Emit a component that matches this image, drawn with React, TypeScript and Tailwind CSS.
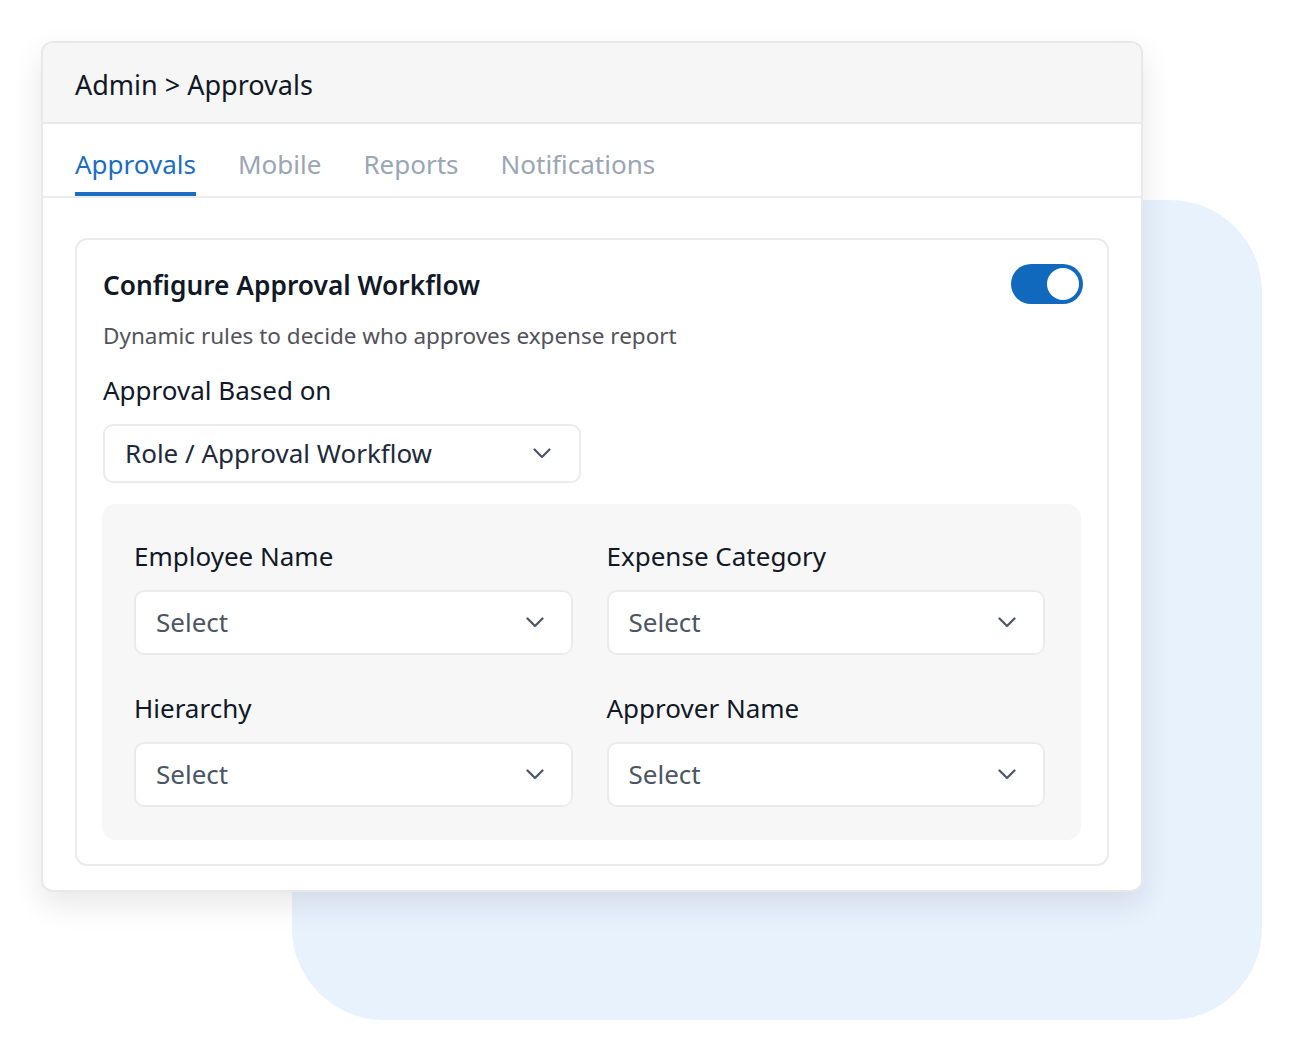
const tabs = ['Approvals', 'Mobile', 'Reports', 'Notifications'];

function Chevron() {
  return (
    <svg width="18" height="11" viewBox="0 0 18 11" fill="none" className="text-[#4b5563]">
      <path d="M1.5 1.5 9 9l7.5-7.5" stroke="currentColor" strokeWidth="2.2" strokeLinecap="round" strokeLinejoin="round" />
    </svg>
  );
}

function SelectBox({ value }: { value: string }) {
  return (
    <div className="flex h-[65px] items-center justify-between rounded-[10px] border-2 border-[#ebebeb] bg-white pl-[20px] pr-[27px]">
      <span className="text-[26px] text-[#4b5563]">{value}</span>
      <Chevron />
    </div>
  );
}

function Field({ label }: { label: string }) {
  return (
    <div className="flex flex-col">
      <div className="text-[26px] leading-[36px] text-[#111827]">{label}</div>
      <div className="mt-[16px]">
        <SelectBox value="Select" />
      </div>
    </div>
  );
}

export default function App() {
  return (
    <div className="relative h-[1060px] w-[1302px] overflow-hidden bg-white font-['Noto_Sans',sans-serif]">
      {/* decorative backdrop */}
      <div className="absolute left-[292px] top-[200px] h-[820px] w-[970px] rounded-[92px] bg-[#e8f2fd]" />

      <div className="relative ml-[41px] mt-[41px] w-[1102px] overflow-hidden rounded-[12px] border-2 border-[#e8e8e8] bg-white shadow-[0_12px_30px_rgba(15,23,42,0.10)]">
        <div className="flex h-[81px] items-center border-b-2 border-[#e8e8e8] bg-[#f6f6f6] px-[32px] pt-[6px]">
          <span className="text-[27px] text-[#111827]">Admin &gt; Approvals</span>
        </div>

        <div className="flex h-[74px] gap-[42px] border-b-2 border-[#ececec] px-[32px]">
          {tabs.map((tab, i) => (
            <div
              key={tab}
              className={`flex items-center border-b-4 pt-[12px] text-[26px] ${i === 0 ? 'border-[#1a6dc0] text-[#1a6dc0]' : 'border-transparent text-[#9aa5b5]'}`}
            >
              {tab}
            </div>
          ))}
        </div>

        <div className="px-[32px] pb-[24px] pt-[40px]">
          <div className="rounded-[12px] border-2 border-[#ebebeb] px-[26px] pb-[24px] pt-[24px]">
            <div className="flex h-[40px] items-center justify-between">
              <h2 className="pt-[4px] text-[26.3px] font-semibold text-[#111827]">Configure Approval Workflow</h2>
              <div className="mr-[-2px] flex h-[40px] w-[72px] items-center justify-end rounded-full bg-[#1169be] pr-[4px]">
                <div className="h-[32px] w-[32px] rounded-full bg-white" />
              </div>
            </div>
            <p className="mt-[17px] text-[22.5px] leading-[30px] text-[#52525b]">Dynamic rules to decide who approves expense report</p>
            <div className="mt-[21px] text-[26px] leading-[36px] text-[#111827]">Approval Based on</div>
            <div className="mt-[16px] flex h-[59px] w-[478px] items-center justify-between rounded-[10px] border-2 border-[#ebebeb] pl-[20px] pr-[28px]">
              <span className="text-[26px] text-[#1e293b]">Role / Approval Workflow</span>
              <Chevron />
            </div>

            <div className="ml-[-1px] mt-[21px] grid grid-cols-2 gap-x-[34px] gap-y-[35px] rounded-[14px] bg-[#f7f7f7] pb-[33px] pl-[32px] pr-[36px] pt-[34px]">
              <Field label="Employee Name" />
              <Field label="Expense Category" />
              <Field label="Hierarchy" />
              <Field label="Approver Name" />
            </div>
          </div>
        </div>
      </div>
    </div>
  );
}
